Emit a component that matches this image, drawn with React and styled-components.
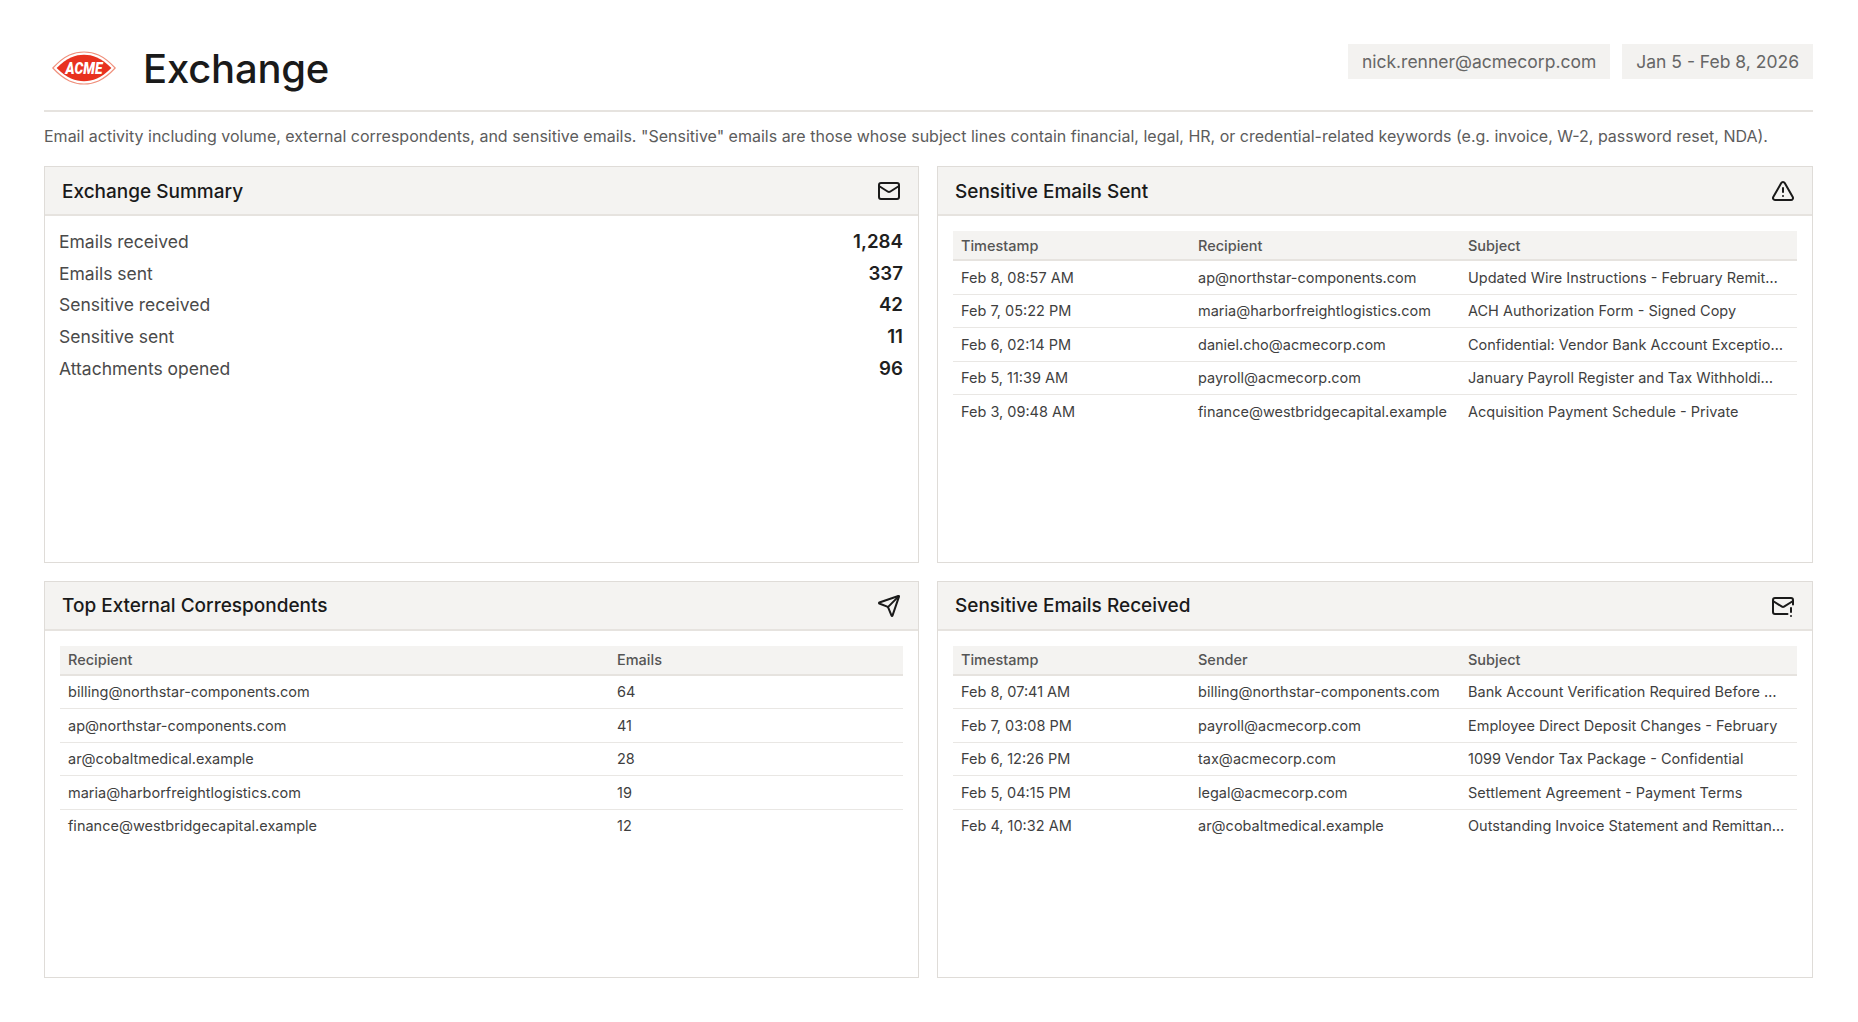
import React from 'react'
import styled, { createGlobalStyle } from 'styled-components'
import { Mail, TriangleAlert, Send, MailWarning } from 'lucide-react'

const Global = createGlobalStyle`
html, body {
  margin: 0;
  padding: 0;
  background: #fff;
  font-family: Inter, "Liberation Sans", sans-serif;
}
`
const Page = styled.div`
  width: 1858px;
  height: 1022px;
  box-sizing: border-box;
  padding: 44px 45px 0 44px;
`
const Header = styled.div`
  display: flex;
  justify-content: space-between;
  align-items: flex-start;
  height: 66px;
  border-bottom: 2px solid #e6e3df;
`
const Brand = styled.div`
  display: flex;
  align-items: center;
  gap: 26px;
  padding-left: 7px;
`
const LogoSvg = styled.svg`
  margin-top: -2px;
`
const Title = styled.h1`
  margin: 0;
  font-size: 40px;
  line-height: 50px;
  font-weight: 500;
  letter-spacing: -0.2px;
  color: #1a1a1a;
`
const Chips = styled.div`
  display: flex;
  gap: 12px;
`
const Chip = styled.div`
  height: 35px;
  line-height: 35px;
  padding: 0 14px;
  background: #f3f2f0;
  font-size: 17.5px;
  color: #666;
`
const Description = styled.p`
  margin: 0;
  padding: 12px 0 18px;
  font-size: 16px;
  line-height: 24px;
  color: #5c5c5c;
  white-space: nowrap;
`
const Grid = styled.div`
  display: grid;
  grid-template-columns: 875px 1fr;
  grid-auto-rows: 397px;
  gap: 17.5px 18px;
`
const Card = styled.section`
  border: 1px solid #dfdcd8;
  box-sizing: border-box;
  display: flex;
  flex-direction: column;
`
const CardHead = styled.div`
  display: flex;
  align-items: center;
  justify-content: space-between;
  height: 46px;
  flex: none;
  padding: 1px 17px 0;
  background: #f4f3f1;
  border-bottom: 2px solid #e6e3df;
  color: #1a1a1a;
`
const CardTitle = styled.h2`
  margin: 0;
  font-size: 19px;
  font-weight: 500;
  color: #1a1a1a;
`
const CardBody = styled.div`
  padding: 15px;
`
const Stats = styled.div`
  padding: 10px 15px 15px 14px;
`
const StatRow = styled.div`
  display: flex;
  justify-content: space-between;
  align-items: center;
  height: 31.6px;
  font-size: 17.5px;
  color: #4a4a4a;
`
const StatValue = styled.span`
  font-weight: 600;
  font-size: 18.7px;
  color: #1f1f1f;
`
const Table = styled.table`
  width: 100%;
  table-layout: fixed;
  border-collapse: collapse;
  font-size: 14.5px;
`
const Th = styled.th`
  width: ${p => p.$w || 'auto'};
  box-sizing: border-box;
  height: 29px;
  padding: 0 8px;
  background: #f4f3f1;
  border-bottom: 2px solid #e6e3df;
  font-weight: 500;
  text-align: left;
  color: #555;
`
const Td = styled.td`
  height: 32.5px;
  padding: 0 8px;
  border-bottom: 1px solid #e9e7e4;
  color: #3f3f3f;
  white-space: nowrap;
  tr:last-child > & {
    border-bottom: none;
  }
`

const Logo = () => (
  <LogoSvg width="66" height="34" viewBox="0 0 68 36">
    <path d="M1 18 C14 4 24 1 34 1 C44 1 54 4 67 18 C54 32 44 35 34 35 C24 35 14 32 1 18 Z" fill="none" stroke="#f0907c" strokeWidth="1.2" />
    <path d="M5 18 C16 7 25 4 34 4 C43 4 52 7 63 18 C52 29 43 32 34 32 C25 32 16 29 5 18 Z" fill="#e8321f" />
    <text x="34" y="24" textAnchor="middle" fontFamily="Roboto, sans-serif" fontWeight="900" fontStyle="italic" fontSize="17" textLength="39" lengthAdjust="spacingAndGlyphs" fill="#fff">ACME</text>
  </LogoSvg>
)

const DataTable = ({ cols, rows }) => (
  <Table>
    <thead>
      <tr>{cols.map(c => <Th key={c.label} $w={c.w}>{c.label}</Th>)}</tr>
    </thead>
    <tbody>
      {rows.map((r, i) => (
        <tr key={i}>{r.map((v, j) => <Td key={j}>{v}</Td>)}</tr>
      ))}
    </tbody>
  </Table>
)

const stats = [
  ['Emails received', '1,284'],
  ['Emails sent', '337'],
  ['Sensitive received', '42'],
  ['Sensitive sent', '11'],
  ['Attachments opened', '96'],
]
const sentCols = [{ label: 'Timestamp', w: '237px' }, { label: 'Recipient', w: '270px' }, { label: 'Subject' }]
const recvCols = [{ label: 'Timestamp', w: '237px' }, { label: 'Sender', w: '270px' }, { label: 'Subject' }]
const extCols = [{ label: 'Recipient', w: '549px' }, { label: 'Emails' }]
const sent = [
  ['Feb 8, 08:57 AM', 'ap@northstar-components.com', 'Updated Wire Instructions - February Remit…'],
  ['Feb 7, 05:22 PM', 'maria@harborfreightlogistics.com', 'ACH Authorization Form - Signed Copy'],
  ['Feb 6, 02:14 PM', 'daniel.cho@acmecorp.com', 'Confidential: Vendor Bank Account Exceptio…'],
  ['Feb 5, 11:39 AM', 'payroll@acmecorp.com', 'January Payroll Register and Tax Withholdi…'],
  ['Feb 3, 09:48 AM', 'finance@westbridgecapital.example', 'Acquisition Payment Schedule - Private'],
]
const received = [
  ['Feb 8, 07:41 AM', 'billing@northstar-components.com', 'Bank Account Verification Required Before …'],
  ['Feb 7, 03:08 PM', 'payroll@acmecorp.com', 'Employee Direct Deposit Changes - February'],
  ['Feb 6, 12:26 PM', 'tax@acmecorp.com', '1099 Vendor Tax Package - Confidential'],
  ['Feb 5, 04:15 PM', 'legal@acmecorp.com', 'Settlement Agreement - Payment Terms'],
  ['Feb 4, 10:32 AM', 'ar@cobaltmedical.example', 'Outstanding Invoice Statement and Remittan…'],
]
const external = [
  ['billing@northstar-components.com', '64'],
  ['ap@northstar-components.com', '41'],
  ['ar@cobaltmedical.example', '28'],
  ['maria@harborfreightlogistics.com', '19'],
  ['finance@westbridgecapital.example', '12'],
]

export default function App() {
  return (
    <Page>
      <Global />
      <Header>
        <Brand>
          <Logo />
          <Title>Exchange</Title>
        </Brand>
        <Chips>
          <Chip>nick.renner@acmecorp.com</Chip>
          <Chip>Jan 5 - Feb 8, 2026</Chip>
        </Chips>
      </Header>
      <Description>
        Email activity including volume, external correspondents, and sensitive emails. "Sensitive" emails are those whose subject lines contain financial, legal, HR, or credential-related keywords (e.g. invoice, W-2, password reset, NDA).
      </Description>
      <Grid>
        <Card>
          <CardHead><CardTitle>Exchange Summary</CardTitle><Mail size={24} strokeWidth={2} /></CardHead>
          <Stats>
            {stats.map(([k, v]) => (
              <StatRow key={k}><span>{k}</span><StatValue>{v}</StatValue></StatRow>
            ))}
          </Stats>
        </Card>
        <Card>
          <CardHead><CardTitle>Sensitive Emails Sent</CardTitle><TriangleAlert size={24} strokeWidth={2} /></CardHead>
          <CardBody><DataTable cols={sentCols} rows={sent} /></CardBody>
        </Card>
        <Card>
          <CardHead><CardTitle>Top External Correspondents</CardTitle><Send size={24} strokeWidth={2} /></CardHead>
          <CardBody><DataTable cols={extCols} rows={external} /></CardBody>
        </Card>
        <Card>
          <CardHead><CardTitle>Sensitive Emails Received</CardTitle><MailWarning size={24} strokeWidth={2} /></CardHead>
          <CardBody><DataTable cols={recvCols} rows={received} /></CardBody>
        </Card>
      </Grid>
    </Page>
  )
}
